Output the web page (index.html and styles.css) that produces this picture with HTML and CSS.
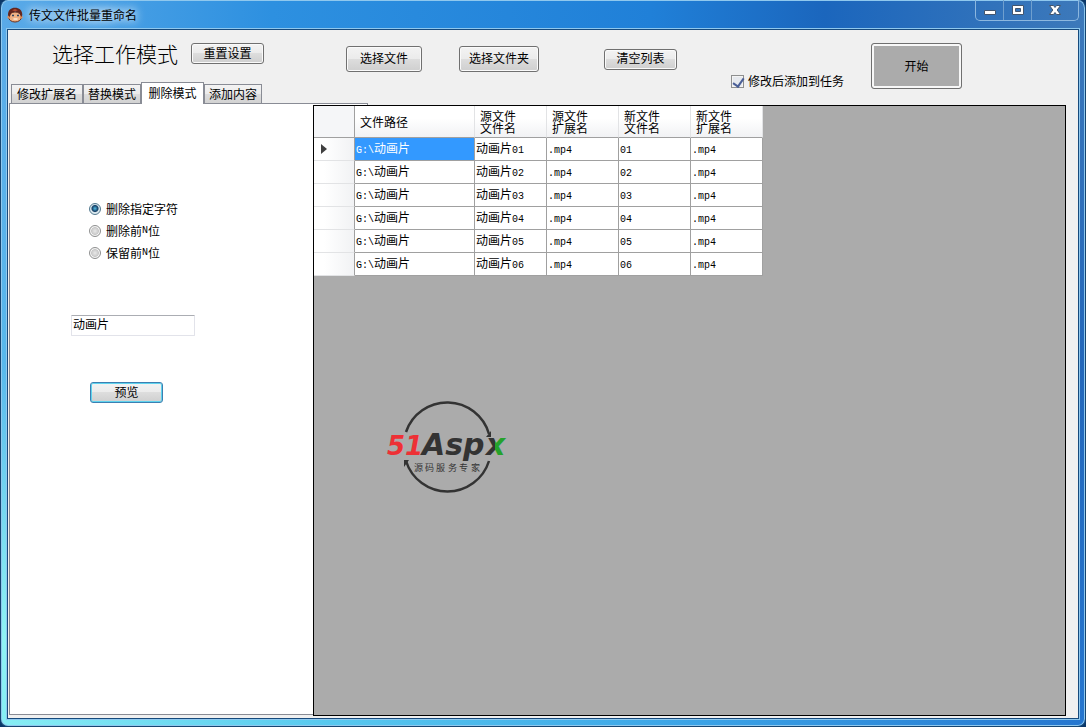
FILE: index.html
```
<!DOCTYPE html>
<html lang="zh-CN">
  <head>
    <meta charset="UTF-8" />
    <meta name="viewport" content="width=device-width, initial-scale=1.0" />
    <title>传文文件批量重命名</title>
    <link rel="stylesheet" href="styles.css">
  </head>

  <body>
    <div class="window">
      <!-- Title bar -->
      <header class="titlebar">
        <svg class="app-icon" width="16" height="16" viewBox="0 0 16 16" aria-hidden="true">
          <ellipse cx="8" cy="10" rx="6.5" ry="5" fill="#efb184" stroke="#6b3220" />
          <circle cx="1.8" cy="10" r="1.5" fill="#d98d5c" />
          <circle cx="14.2" cy="10" r="1.5" fill="#d98d5c" />
          <path d="M1 8C1 3 4 .8 8 .8S15.300 3 15.300 8l-1 2-2-4-4-1.500L4.500 6 2.500 10z" fill="#64251c" />
          <path d="M5 3.200l3-1.200 3 1.300-3 1z" fill="#b64b31" />
          <path d="M5 8.500h2M10 8.500h2" stroke="#2d4561" stroke-width="1.500" />
          <path d="M6.500 12h4" stroke="#fff1df" stroke-width="1.300" />
        </svg>
        <span class="title">传文文件批量重命名</span>
        <div class="window-controls">
          <button type="button" class="minimize" aria-label="最小化">
            <svg width="14" height="12" viewBox="0 0 14 12"><path d="M1.500 6.500h11v4h-11z" fill="#fff" stroke="#43566f" /></svg>
          </button>
          <button type="button" class="maximize" aria-label="最大化">
            <svg width="14" height="12" viewBox="0 0 14 12"><path fill-rule="evenodd" d="M1.500 1.500h11v9h-11zM4.500 4.500v3h5v-3z" fill="#fff" stroke="#43566f" /></svg>
          </button>
          <button type="button" class="close" aria-label="关闭">
            <svg width="14" height="12" viewBox="0 0 14 12"><path d="M1.500 1.500h4L7 3.500l1.500-2h4L9.200 6l3.300 4.500h-4L7 8.500l-1.500 2h-4L4.800 6z" fill="#fff" stroke="#43566f" /></svg>
          </button>
        </div>
      </header>

      <div class="client">
        <!-- Work mode -->
        <aside class="mode">
          <div class="mode-header">
            <h1>选择工作模式</h1>
            <button type="button" class="btn">重置设置</button>
          </div>
          <div class="tabs" role="tablist">
            <button type="button" class="tab tab-wide" role="tab">修改扩展名</button>
            <button type="button" class="tab" role="tab">替换模式</button>
            <button type="button" class="tab active" role="tab" aria-selected="true">删除模式</button>
            <button type="button" class="tab" role="tab">添加内容</button>
          </div>
          <form class="tab-panel" role="tabpanel">
            <div class="options">
              <label><input type="radio" name="mode" checked />删除指定字符</label>
              <label><input type="radio" name="mode" />删除前<span class="half">N</span>位</label>
              <label><input type="radio" name="mode" />保留前<span class="half">N</span>位</label>
            </div>
            <input type="text" class="keyword" value="动画片" aria-label="指定字符" />
            <button type="button" class="btn preview">预览</button>
          </form>
        </aside>

        <!-- File list -->
        <main class="files">
          <div class="toolbar">
            <div class="file-actions">
              <button type="button" class="btn large">选择文件</button>
              <button type="button" class="btn large folder">选择文件夹</button>
              <button type="button" class="btn clear">清空列表</button>
            </div>
            <label class="add-task"><input type="checkbox" checked />修改后添加到任务</label>
            <button type="button" class="start">开始</button>
          </div>

          <div class="datagrid">
            <table>
              <colgroup>
                <col class="col-marker" />
                <col class="col-path" />
                <col span="4" />
              </colgroup>
              <thead>
                <tr>
                  <th></th>
                  <th>文件路径</th>
                  <th>源文件<br />文件名</th>
                  <th>源文件<br />扩展名</th>
                  <th>新文件<br />文件名</th>
                  <th>新文件<br />扩展名</th>
                </tr>
              </thead>
              <tbody>
                <tr>
                  <th><svg width="6" height="10" viewBox="0 0 6 10"><path d="M0 0l6 5-6 5z" fill="#404040" /></svg></th>
                  <td class="selected"><span class="half">G:\</span>动画片</td>
                  <td>动画片<span class="half">01</span></td>
                  <td><span class="half">.mp4</span></td>
                  <td><span class="half">01</span></td>
                  <td><span class="half">.mp4</span></td>
                </tr>
                <tr>
                  <th></th>
                  <td><span class="half">G:\</span>动画片</td>
                  <td>动画片<span class="half">02</span></td>
                  <td><span class="half">.mp4</span></td>
                  <td><span class="half">02</span></td>
                  <td><span class="half">.mp4</span></td>
                </tr>
                <tr>
                  <th></th>
                  <td><span class="half">G:\</span>动画片</td>
                  <td>动画片<span class="half">03</span></td>
                  <td><span class="half">.mp4</span></td>
                  <td><span class="half">03</span></td>
                  <td><span class="half">.mp4</span></td>
                </tr>
                <tr>
                  <th></th>
                  <td><span class="half">G:\</span>动画片</td>
                  <td>动画片<span class="half">04</span></td>
                  <td><span class="half">.mp4</span></td>
                  <td><span class="half">04</span></td>
                  <td><span class="half">.mp4</span></td>
                </tr>
                <tr>
                  <th></th>
                  <td><span class="half">G:\</span>动画片</td>
                  <td>动画片<span class="half">05</span></td>
                  <td><span class="half">.mp4</span></td>
                  <td><span class="half">05</span></td>
                  <td><span class="half">.mp4</span></td>
                </tr>
                <tr>
                  <th></th>
                  <td><span class="half">G:\</span>动画片</td>
                  <td>动画片<span class="half">06</span></td>
                  <td><span class="half">.mp4</span></td>
                  <td><span class="half">06</span></td>
                  <td><span class="half">.mp4</span></td>
                </tr>
              </tbody>
            </table>

            <svg class="logo" width="130" height="94" viewBox="0 0 130 94">
              <defs>
                <linearGradient id="x-fill">
                  <stop offset="50%" stop-color="#333" />
                  <stop offset="50%" stop-color="#25a22b" />
                </linearGradient>
              </defs>
              <g fill="none" stroke="#333" stroke-width="2.500">
                <path d="M20 31A43.500 43.500 0 0 1 103 33" />
                <path d="M103 60A43.500 43.500 0 0 1 20 60" />
              </g>
              <path d="M105 30v6h-5zM18 66v-7h5z" fill="#333" />
              <g class="logo-name">
                <text x="1" y="54" font-size="26" fill="#ee3035">51</text>
                <text x="36" y="54" font-size="30" fill="#333">Asp</text>
                <text x="100" y="54" font-size="30" fill="url(#x-fill)">x</text>
              </g>
              <g class="logo-caption">
                <text x="28" y="70">源</text>
                <text x="39" y="70">码</text>
                <text x="50" y="70">服</text>
                <text x="62" y="70">务</text>
                <text x="73" y="70">专</text>
                <text x="85" y="70">家</text>
              </g>
            </svg>
          </div>
        </main>
      </div>
    </div>
  </body>
</html>
```

FILE: styles.css
```
* {
  margin: 0;
  padding: 0;
  box-sizing: border-box;
}

body {
  font-family: "Noto Sans CJK SC", sans-serif;
  font-size: 12px;
  line-height: 16px;
  color: #000;
  background: #0b3768;
}

button,
input {
  font: inherit;
  color: inherit;
}

.half {
  font-family: "Liberation Mono", monospace;
  font-size: 10px;
}

/* Window frame */
.window {
  display: flex;
  flex-direction: column;
  height: 100vh;
  padding: 0 6px 7px;
  border: 1px solid #164672;
  border-top: 0;
  border-radius: 8px;
  box-shadow: inset 0 0 0 1px #8fc8ee;
  background:
    linear-gradient(to right, #5aaae8, #2d90e0 25%, #2080d8 60%, #1b66bd 76%, #3d79ba) top / 100% 29px no-repeat,
    linear-gradient(to right, #87eef4, #58c9ef 30%, #3aa2e6 65%, #2576cf) bottom / 100% 8px no-repeat,
    linear-gradient(#5aaae8, #58b8ec 50%, #8ff3f4 88%, #85eef4) left / 8px 100% no-repeat,
    linear-gradient(#3d79ba, #2367ba 50%, #2576cf) right / 8px 100% no-repeat;
}

.titlebar {
  display: flex;
  align-items: center;
  height: 29px;
  flex-shrink: 0;
}

.title {
  margin-left: 6px;
  text-shadow: 0 0 8px #fff, 0 0 12px #fff;
}

.window-controls {
  display: flex;
  align-self: flex-start;
  height: 21px;
  margin-left: auto;
  border: 1px solid #8cb7df;
  border-top: 0;
  border-radius: 0 0 5px 5px;
}

.window-controls button {
  display: flex;
  align-items: center;
  justify-content: center;
  width: 28px;
  background: none;
  border: 0;
  border-right: 1px solid #6f9fce;
}

.window-controls .close {
  width: 46px;
  border-right: 0;
}

.client {
  flex: 1;
  display: flex;
  min-height: 0;
  background: #f0f0f0;
  border: 1px solid #174a7c;
  box-shadow: 0 0 0 1px #8fc8ee;
}

/* Buttons */
.btn {
  width: 73px;
  height: 21px;
  padding-bottom: 2px;
  background: linear-gradient(#f3f3f3, #ebebeb 49%, #dddddd 50%, #cfcfcf);
  border: 1px solid #707070;
  border-radius: 3px;
  box-shadow: inset 0 0 0 1px #fafafa;
  line-height: 16px;
}

.btn.large {
  width: 76px;
  height: 26px;
}

.btn.folder {
  width: 80px;
}

/* Work mode */
.mode {
  width: 305px;
  flex-shrink: 0;
  display: flex;
  flex-direction: column;
  padding-left: 1px;
}

.mode-header {
  display: flex;
  align-items: flex-start;
  gap: 13px;
  height: 46px;
  padding: 13px 0 0 43px;
}

.mode-header h1 {
  font-size: 21px;
  font-weight: 300;
  line-height: 20px;
}

.tabs {
  display: flex;
  align-items: flex-end;
  height: 27px;
  padding-left: 2px;
}

.tab {
  width: 58px;
  height: 19px;
  background: linear-gradient(#f3f3f3, #ebebeb 49%, #dddddd 50%, #d2d2d2);
  border: 1px solid #898c95;
  border-bottom: 0;
  white-space: nowrap;
}

.tab-wide {
  width: 72px;
}

.tab.active {
  position: relative;
  z-index: 1;
  width: 63px;
  height: 22px;
  padding-bottom: 2px;
  margin-bottom: -1px;
  background: #fff;
}

.tab-panel {
  position: relative;
  flex: 1;
  margin-bottom: 3px;
  background: #fff;
  border: 1px solid #898c95;
  border-right: 0;
  padding: 94px 0 0 61px;
}

/* the tab page runs on behind the grid */
.tab-panel::after {
  content: "";
  position: absolute;
  top: -1px;
  left: 100%;
  width: 54px;
  height: 2px;
  background: #fff;
  border-top: 1px solid #898c95;
  border-right: 1px solid #898c95;
}

.options {
  display: flex;
  flex-direction: column;
  padding-left: 18px;
  margin-bottom: 51px;
}

.options label {
  display: flex;
  align-items: center;
  height: 22px;
}

.options input {
  appearance: none;
  width: 12px;
  height: 12px;
  margin-right: 5px;
  border: 1px solid #8e8f8f;
  border-radius: 50%;
  background: radial-gradient(#e8e8e8, #c9c9c9 50%, #f4f4f4 60%);
}

.options input:checked {
  border-color: #52798f;
  background: radial-gradient(circle at 50% 45%, #52bde6, #123c63 40%, #dce9ef 55%);
}

.keyword {
  display: block;
  width: 124px;
  height: 21px;
  padding: 0 1px 4px;
  border: 1px solid #e2e3ea;
  border-top-color: #abadb3;
  border-radius: 1px;
}

.preview {
  display: block;
  margin: 46px 0 0 19px;
  border-color: #3c7fb1;
  box-shadow: inset 0 0 0 1px #5fd3ee;
}

/* File list */
.files {
  flex: 1;
  display: flex;
  flex-direction: column;
  min-width: 0;
  padding: 0 12px 2px 0;
}

.toolbar {
  display: flex;
  align-items: flex-start;
  height: 75px;
  padding: 13px 0 0 33px;
}

.file-actions {
  display: flex;
  align-items: center;
  gap: 37px;
  margin-top: 3px;
}

.clear {
  margin-left: 28px;
}

.add-task {
  display: flex;
  align-items: center;
  align-self: flex-end;
  margin: 0 27px 16px 54px;
}

.add-task input {
  appearance: none;
  width: 13px;
  height: 13px;
  margin-right: 4px;
  border: 1px solid #8e8f8f;
  background: #e6e9ee;
  box-shadow: inset 0 0 0 1px #f4f4f4;
}

.add-task input:checked::before {
  content: "";
  display: block;
  width: 5px;
  height: 9px;
  margin-left: 3px;
  border: solid #4a5f97;
  border-width: 0 2px 2px 0;
  transform: rotate(35deg);
}

.start {
  width: 91px;
  height: 46px;
  background: #ababab;
  border: 1px solid #707070;
  border-radius: 3px;
  box-shadow: inset 0 0 0 2px #f8f8f8;
}

.datagrid {
  position: relative;
  flex: 1;
  background: #ababab;
  border: 1px solid #000;
}

table {
  width: 449px;
  table-layout: fixed;
  border-collapse: separate;
  border-spacing: 0;
}

.col-marker {
  width: 41px;
}

.col-path {
  width: 120px;
}

thead th {
  height: 32px;
  padding-left: 5px;
  background: linear-gradient(#fff, #fff 40%, #f1f2f4);
  border-right: 1px solid #e2e3e5;
  border-bottom: 1px solid #a0a0a0;
  font-weight: 400;
  line-height: 12px;
  text-align: left;
}

thead th:first-child {
  background: #f5f6f8;
  border-right-color: #a0a0a0;
}

tbody th {
  padding-left: 7px;
  background: linear-gradient(to right, #fff, #fff 25%, #f1f2f4);
  border-right: 1px solid #a0a0a0;
  border-bottom: 1px solid #e2e3e5;
  text-align: left;
}

tbody th svg {
  display: block;
}

td {
  height: 23px;
  padding-left: 1px;
  background: #fff;
  border-right: 1px solid #a0a0a0;
  border-bottom: 1px solid #a0a0a0;
  white-space: nowrap;
}

td.selected {
  background: #3399ff;
  color: #fff;
}

/* watermark over the grid */
.logo {
  position: absolute;
  top: 295px;
  left: 72px;
}

.logo-name {
  font-family: "DejaVu Sans", sans-serif;
  font-weight: bold;
  font-style: italic;
}

.logo-caption {
  font-size: 9px;
  fill: #333;
}
```
